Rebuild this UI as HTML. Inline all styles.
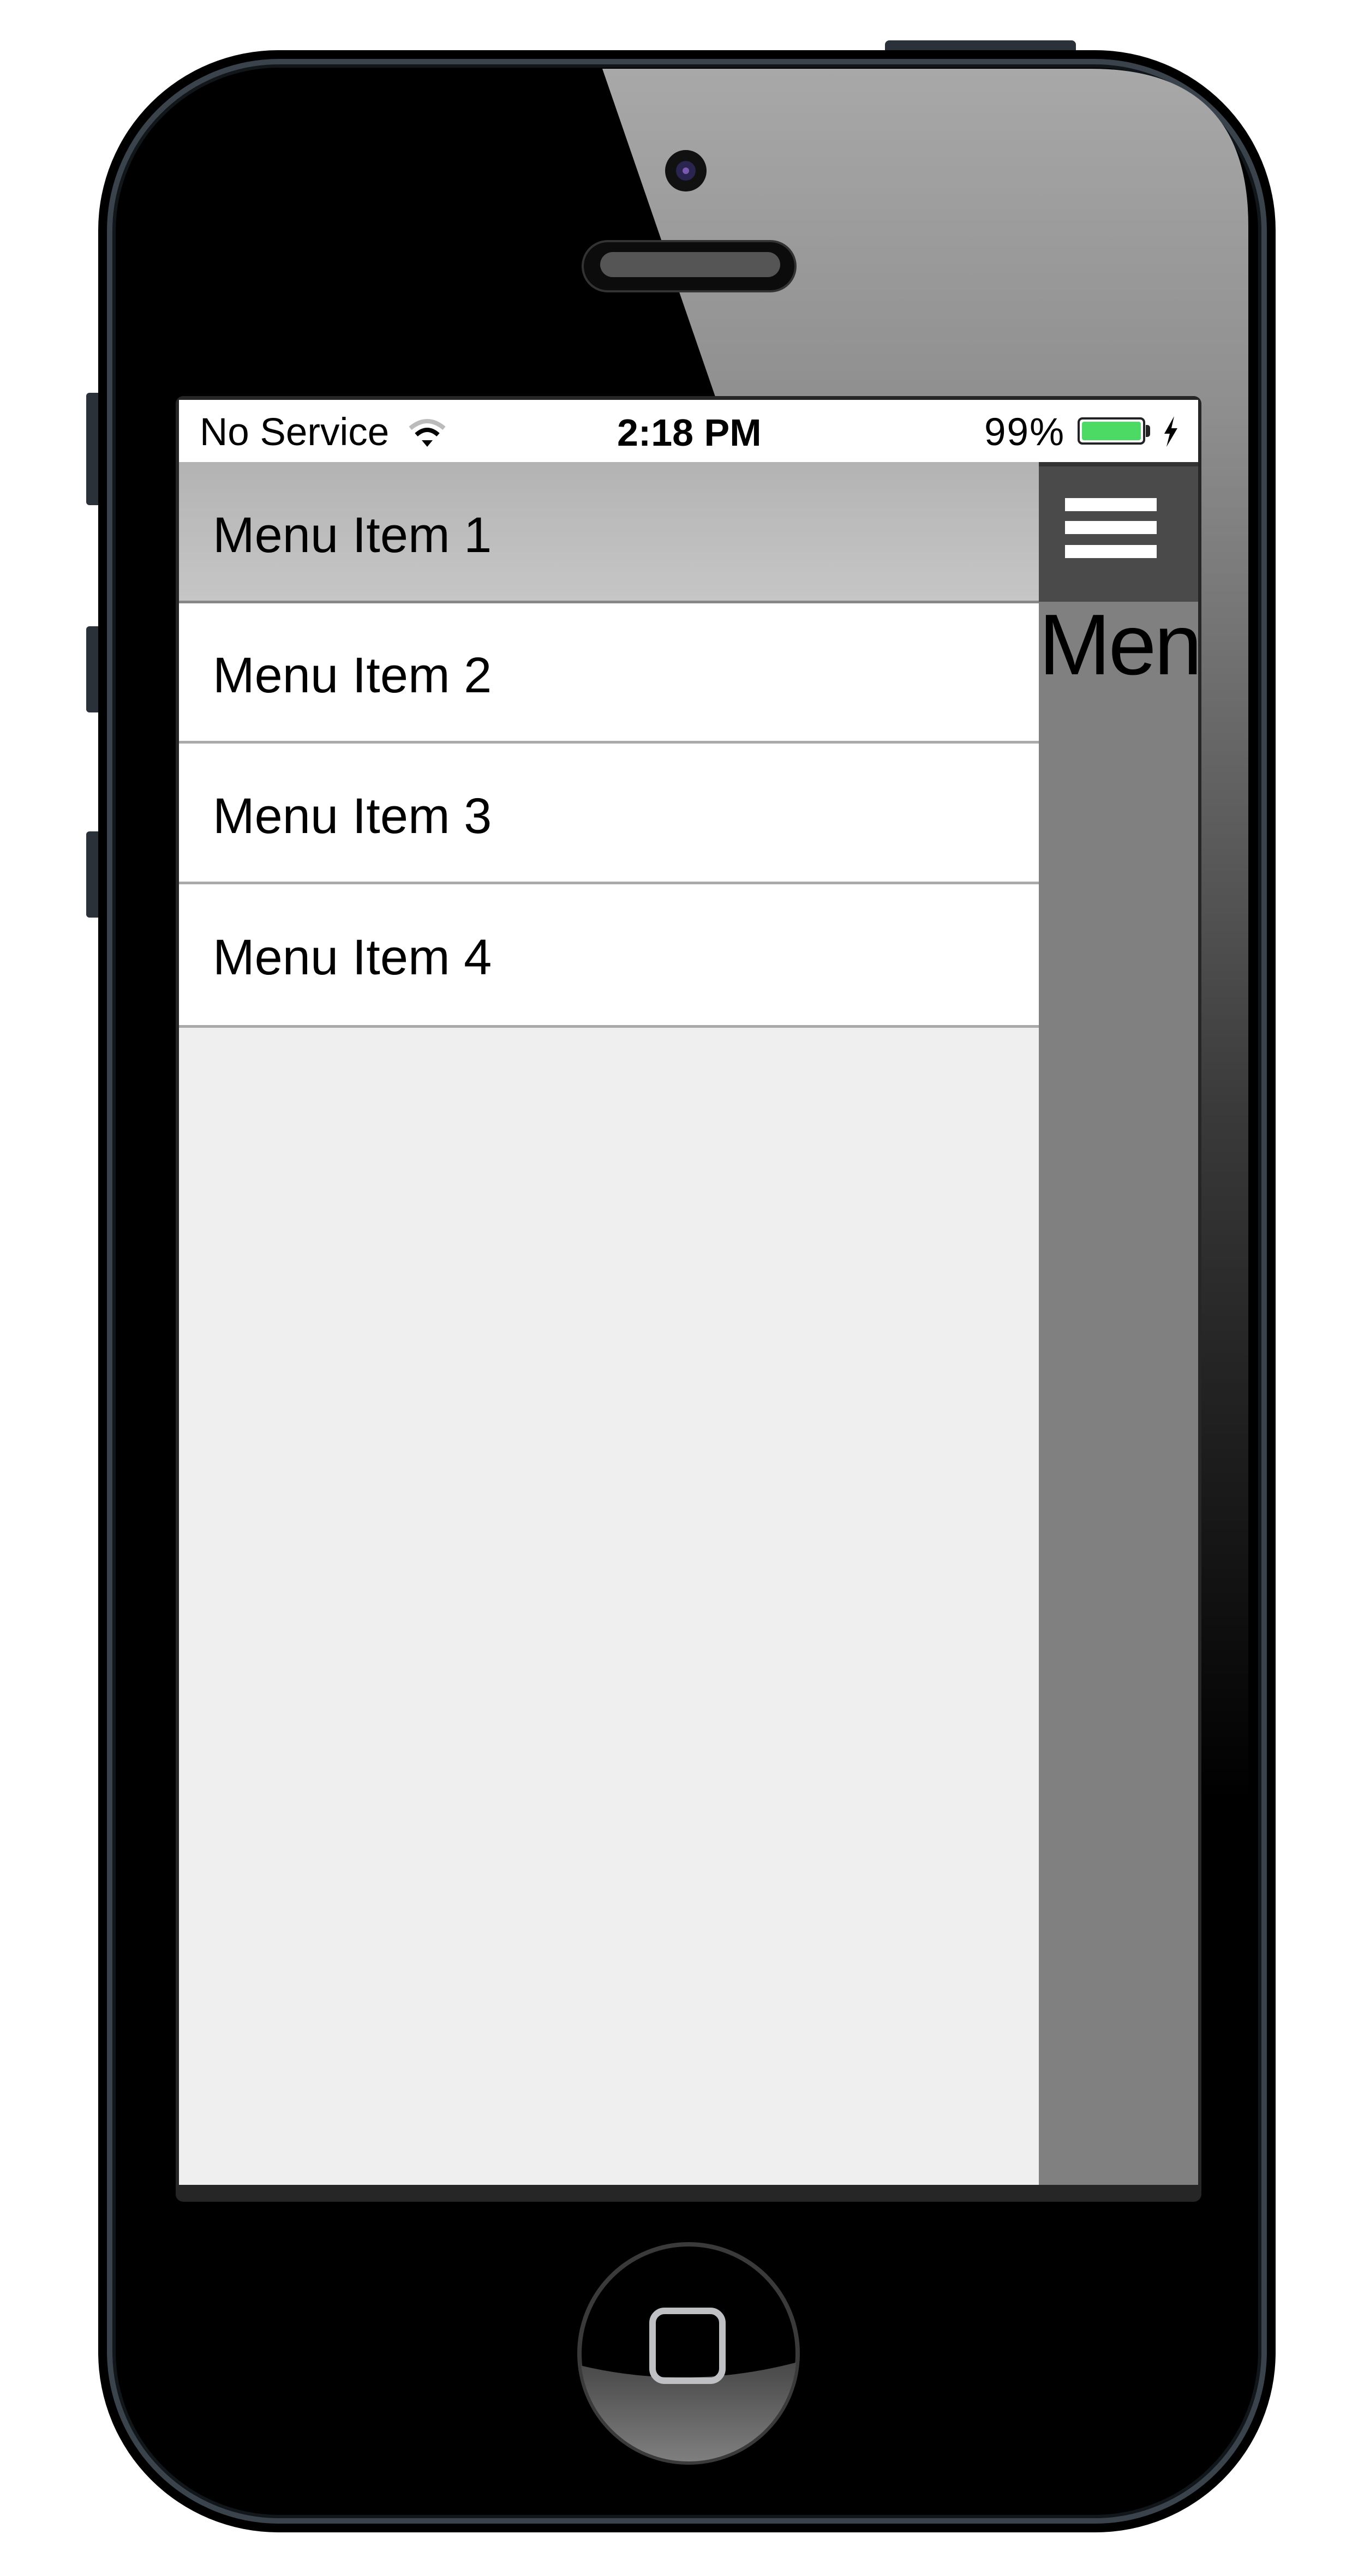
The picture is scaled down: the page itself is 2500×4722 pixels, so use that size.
<!DOCTYPE html>
<html><head><meta charset="utf-8"><style>
html,body{margin:0;padding:0;width:2500px;height:4722px;background:#fff;overflow:hidden;position:relative;font-family:"Liberation Sans",Arial,sans-serif}
.a{position:absolute}
</style></head><body>
<div class="a" style="left:158px;top:720px;width:30px;height:206px;background:#2a3138;border-radius:6px 0 0 6px"></div>
<div class="a" style="left:158px;top:1148px;width:30px;height:158px;background:#2a3138;border-radius:6px 0 0 6px"></div>
<div class="a" style="left:158px;top:1524px;width:30px;height:158px;background:#2a3138;border-radius:6px 0 0 6px"></div>
<div class="a" style="left:1622px;top:74px;width:350px;height:30px;background:#2a3138;border-radius:8px 8px 0 0"></div>
<div class="a" style="left:180px;top:92px;width:2158px;height:4550px;background:#000;border-radius:330px;"></div>
<div class="a" style="left:196px;top:108px;width:2126px;height:4518px;border-radius:316px;border:10px solid #3a434c;box-sizing:border-box;box-shadow:inset 0 0 0 6px #11161b"></div>
<div class="a" style="left:230px;top:125px;width:2058px;height:4480px;background:#000;border-radius:290px;"></div>
<svg class="a" style="left:0;top:0" width="2500" height="4722">
<defs><linearGradient id="g" x1="0" y1="0" x2="0" y2="1"><stop offset="0" stop-color="#a8a8a8"/><stop offset="0.2" stop-color="#8e8e8e"/><stop offset="0.6" stop-color="#3a3a3a"/><stop offset="1" stop-color="#000"/></linearGradient>
<linearGradient id="hb" x1="0" y1="0" x2="0" y2="1"><stop offset="0" stop-color="#454545"/><stop offset="1" stop-color="#848484"/></linearGradient>
<clipPath id="hc"><circle cx="1262" cy="4314" r="198"/></clipPath></defs>
<path d="M1104 126 L2000 126 Q2288 126 2288 414 L2288 3300 L2196 3300 L2196 730 L1312 730 Z" fill="url(#g)"/>
<circle cx="1257" cy="313" r="38" fill="#111"/><circle cx="1257" cy="313" r="18" fill="#2a2450"/><circle cx="1257" cy="313" r="6" fill="#7a5ab0"/>
<rect x="1068" y="442" width="390" height="92" rx="46" fill="#0c0c0c" stroke="#333" stroke-width="4"/>
<rect x="1100" y="462" width="330" height="46" rx="23" fill="#555"/>
<circle cx="1262" cy="4314" r="200" fill="#000" stroke="#3a3a3a" stroke-width="8"/>
<path clip-path="url(#hc)" d="M1040 4330 Q1262 4390 1490 4322 L1490 4530 L1040 4530Z" fill="url(#hb)"/>
<rect x="1196" y="4236" width="128" height="128" rx="22" fill="none" stroke="#bfc0c4" stroke-width="12"/>
</svg>
<div class="a" style="left:322px;top:726px;width:1880px;height:3310px;background:#262626;border-radius:14px"></div>
<div class="a" style="left:328px;top:733px;width:1868px;height:3272px;background:#efefef;overflow:hidden">
  <div class="a" style="left:0;top:0;width:1868px;height:114px;background:#fff"></div>
  <div class="a" style="left:38px;top:20px;font-size:71px;color:#000;line-height:80px">No Service</div>
  <svg class="a" style="left:420px;top:30px" width="70" height="60"><path d="M4 22 Q35 -4 66 22" fill="none" stroke="#bbb" stroke-width="8"/><path d="M15 34 Q35 16 55 34" fill="none" stroke="#000" stroke-width="8"/><path d="M25 44 L45 44 L35 56Z" fill="#000"/></svg>
  <div class="a" style="left:803px;top:20px;font-size:70px;font-weight:bold;line-height:80px">2:18 PM</div>
  <div class="a" style="left:1476px;top:20px;font-size:71px;line-height:80px;letter-spacing:2px">99%</div>
  <div class="a" style="left:1647px;top:32px;width:124px;height:50px;border:4px solid #222;border-radius:9px;box-sizing:border-box;padding:4px"><div style="width:100%;height:100%;background:#4cd964;border-radius:4px"></div></div>
  <div class="a" style="left:1772px;top:46px;width:8px;height:22px;background:#222;border-radius:0 5px 5px 0"></div>
  <svg class="a" style="left:1800px;top:28px" width="34" height="60"><path d="M24 2 L6 34 L16 34 L10 58 L30 24 L19 24 Z" fill="#000"/></svg>
  <div class="a" style="left:0;top:114px;width:1576px;height:254px;background:linear-gradient(#b3b3b3,#c6c6c6);border-bottom:5px solid #888"></div>
  <div class="a" style="left:62px;top:198px;font-size:92px;line-height:100px">Menu Item 1</div>
  <div class="a" style="left:0;top:373px;width:1576px;height:252px;background:#fff;border-bottom:5px solid #aaa"></div>
  <div class="a" style="left:62px;top:455px;font-size:92px;line-height:100px">Menu Item 2</div>
  <div class="a" style="left:0;top:630px;width:1576px;height:253px;background:#fff;border-bottom:5px solid #aaa"></div>
  <div class="a" style="left:62px;top:713px;font-size:92px;line-height:100px">Menu Item 3</div>
  <div class="a" style="left:0;top:888px;width:1576px;height:258px;background:#fff;border-bottom:5px solid #aaa"></div>
  <div class="a" style="left:62px;top:972px;font-size:92px;line-height:100px">Menu Item 4</div>
  <div class="a" style="left:1576px;top:114px;width:292px;height:3160px;background:#808080;overflow:hidden">
    <div class="a" style="left:0;top:0;width:292px;height:256px;background:#4a4a4a;border-top:8px solid #333;box-sizing:border-box"></div>
    <div class="a" style="left:48px;top:66px;width:168px;height:24px;background:#fff"></div>
    <div class="a" style="left:48px;top:108px;width:168px;height:24px;background:#fff"></div>
    <div class="a" style="left:48px;top:152px;width:168px;height:24px;background:#fff"></div>
    <div class="a" style="left:0;top:250px;font-size:158px;line-height:170px;color:#000;white-space:nowrap;letter-spacing:-4px">Menu</div>
  </div>
</div>
</body></html>
